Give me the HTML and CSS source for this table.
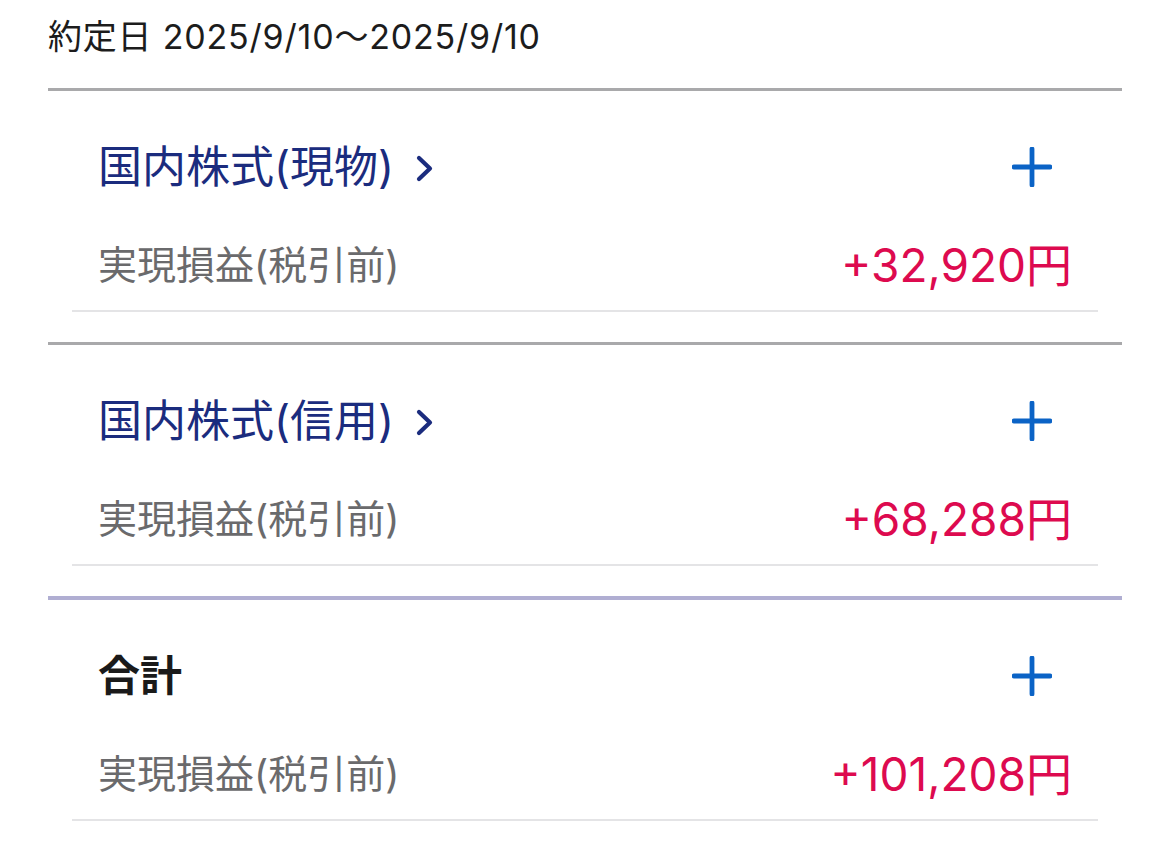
FILE: index.html
```html
<!DOCTYPE html>
<html lang="ja">
<head>
<meta charset="utf-8">
<link rel="stylesheet" href="styles.css">
</head>
<body>
<div class="page">
  <div class="period">約定日 2025/9/10～2025/9/10</div>

  <section class="block">
    <div class="inner">
      <div class="head">
        <a class="title link">国内株式(現物)<svg class="chev" width="17" height="27" viewBox="0 0 17 27"><polyline points="3,3 14,13.5 3,24" fill="none" stroke="#1b2c7e" stroke-width="4.2" stroke-linecap="round" stroke-linejoin="round"/></svg></a>
        <svg class="plus" width="40" height="40" viewBox="0 0 40 40"><line x1="20" y1="2" x2="20" y2="38" stroke="#0b63c6" stroke-width="4.8" stroke-linecap="round"/><line x1="2" y1="20" x2="38" y2="20" stroke="#0b63c6" stroke-width="4.8" stroke-linecap="round"/></svg>
      </div>
      <div class="row">
        <span class="label">実現損益(税引前)</span>
        <span class="value">+32,920円</span>
      </div>
    </div>
  </section>

  <section class="block">
    <div class="inner">
      <div class="head">
        <a class="title link">国内株式(信用)<svg class="chev" width="17" height="27" viewBox="0 0 17 27"><polyline points="3,3 14,13.5 3,24" fill="none" stroke="#1b2c7e" stroke-width="4.2" stroke-linecap="round" stroke-linejoin="round"/></svg></a>
        <svg class="plus" width="40" height="40" viewBox="0 0 40 40"><line x1="20" y1="2" x2="20" y2="38" stroke="#0b63c6" stroke-width="4.8" stroke-linecap="round"/><line x1="2" y1="20" x2="38" y2="20" stroke="#0b63c6" stroke-width="4.8" stroke-linecap="round"/></svg>
      </div>
      <div class="row">
        <span class="label">実現損益(税引前)</span>
        <span class="value">+68,288円</span>
      </div>
    </div>
  </section>

  <section class="block total">
    <div class="inner">
      <div class="head">
        <span class="title strong">合計</span>
        <svg class="plus" width="40" height="40" viewBox="0 0 40 40"><line x1="20" y1="2" x2="20" y2="38" stroke="#0b63c6" stroke-width="4.8" stroke-linecap="round"/><line x1="2" y1="20" x2="38" y2="20" stroke="#0b63c6" stroke-width="4.8" stroke-linecap="round"/></svg>
      </div>
      <div class="row">
        <span class="label">実現損益(税引前)</span>
        <span class="value">+101,208円</span>
      </div>
    </div>
  </section>
</div>
</body>
</html>
```

FILE: styles.css
```css
html, body {
  margin: 0;
  padding: 0;
  background: #ffffff;
}

body {
  font-family: "Inter", "Noto Sans CJK JP", sans-serif;
  color: #1a1a1a;
}

.page {
  padding: 0 48px;
}

.period {
  font-size: 34px;
  letter-spacing: 0.8px;
  line-height: 40px;
  padding-top: 17px;
  margin-bottom: 31px;
  color: #1c1c1c;
}

.block {
  border-top: 3px solid #a9a9ab;
  padding: 0 24px 30px;
}

.block.total {
  border-top: 4px solid #b0aed2;
}

.inner {
  border-bottom: 2px solid #e4e4e6;
}

.head {
  display: flex;
  align-items: center;
  justify-content: space-between;
  padding: 50px 46px 0 26px;
  height: 52px;
}

.title {
  font-size: 44px;
  line-height: 52px;
  display: flex;
  align-items: center;
}

.link {
  color: #1b2c7e;
}

.strong {
  font-weight: bold;
  color: #1a1a1a;
  font-size: 42px;
}

.chev {
  margin-left: 22px;
  margin-top: 2px;
}

.plus {
  display: block;
}

.row {
  display: flex;
  align-items: center;
  justify-content: space-between;
  padding: 50px 26px 23px 26px;
  height: 44px;
}

.label {
  font-size: 39px;
  line-height: 44px;
  color: #6a6a6c;
}

.value {
  font-size: 46px;
  line-height: 44px;
  color: #dd0a4f;
}
```
